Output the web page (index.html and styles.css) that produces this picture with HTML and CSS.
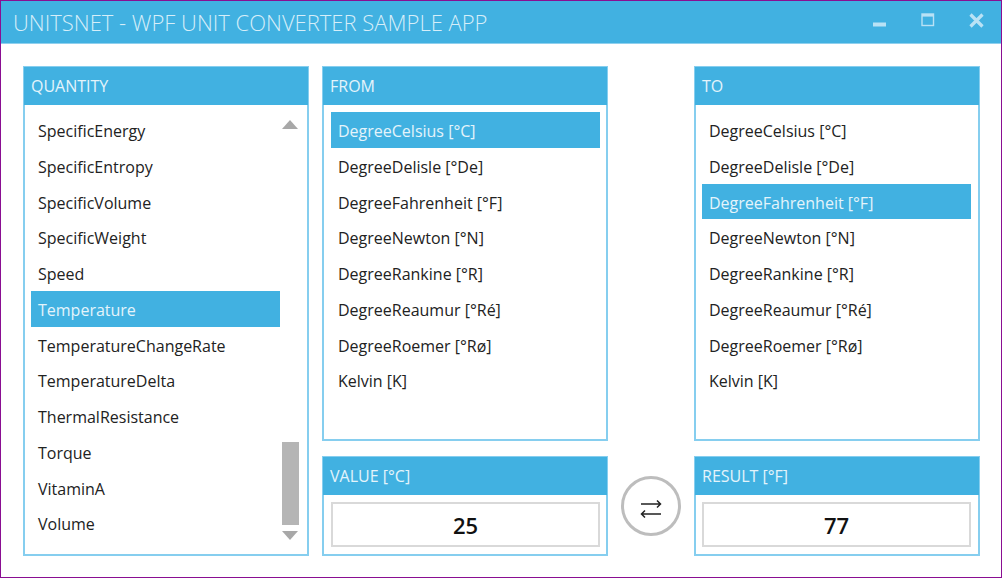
FILE: index.html
```html
<!DOCTYPE html>
<html lang="en">
<head>
<meta charset="utf-8">
<title>UnitsNet - WPF Unit Converter Sample App</title>
<link rel="stylesheet" href="styles.css">
</head>
<body>
<div class="window">
  <header class="titlebar">
    <h1 class="title">UNITSNET - WPF UNIT CONVERTER SAMPLE APP</h1>
    <div class="controls">
      <svg class="ctl" width="14" height="14" viewBox="0 0 14 14"><rect x="0" y="9.5" width="13" height="4" fill="#b9e2f5"/></svg>
      <svg class="ctl" width="14" height="14" viewBox="0 0 14 14"><rect x="1" y="1" width="11.5" height="11.5" fill="none" stroke="#b9e2f5" stroke-width="1.4"/><rect x="1" y="1" width="11.5" height="2.6" fill="#b9e2f5"/></svg>
      <svg class="ctl" width="15" height="15" viewBox="0 0 15 15"><path d="M1.5 1.5 13.5 13.5M13.5 1.5 1.5 13.5" stroke="#b9e2f5" stroke-width="3.2" fill="none"/></svg>
    </div>
  </header>
  <main class="content">
    <section class="panel quantity">
      <h2 class="panel-head">QUANTITY</h2>
      <div class="list-wrap">
        <ul class="list">
          <li>SpecificEnergy</li>
          <li>SpecificEntropy</li>
          <li>SpecificVolume</li>
          <li>SpecificWeight</li>
          <li>Speed</li>
          <li class="selected">Temperature</li>
          <li>TemperatureChangeRate</li>
          <li>TemperatureDelta</li>
          <li>ThermalResistance</li>
          <li>Torque</li>
          <li>VitaminA</li>
          <li>Volume</li>
        </ul>
        <div class="scrollbar">
          <span class="arrow-up"></span>
          <span class="thumb"></span>
          <span class="arrow-down"></span>
        </div>
      </div>
    </section>
    <section class="panel from">
      <h2 class="panel-head">FROM</h2>
      <ul class="list">
        <li class="selected">DegreeCelsius [°C]</li>
        <li>DegreeDelisle [°De]</li>
        <li>DegreeFahrenheit [°F]</li>
        <li>DegreeNewton [°N]</li>
        <li>DegreeRankine [°R]</li>
        <li>DegreeReaumur [°Ré]</li>
        <li>DegreeRoemer [°Rø]</li>
        <li>Kelvin [K]</li>
      </ul>
    </section>
    <section class="panel to">
      <h2 class="panel-head">TO</h2>
      <ul class="list">
        <li>DegreeCelsius [°C]</li>
        <li>DegreeDelisle [°De]</li>
        <li class="selected">DegreeFahrenheit [°F]</li>
        <li>DegreeNewton [°N]</li>
        <li>DegreeRankine [°R]</li>
        <li>DegreeReaumur [°Ré]</li>
        <li>DegreeRoemer [°Rø]</li>
        <li>Kelvin [K]</li>
      </ul>
    </section>
    <section class="panel value">
      <h2 class="panel-head">VALUE [°C]</h2>
      <div class="field-wrap"><div class="field">25</div></div>
    </section>
    <div class="swap-cell">
      <div class="swap">
        <svg width="22" height="24" viewBox="0 0 22 24"><path d="M1 10H20.500M17 6.500 20.500 10 17 13.500M21 20H1.500M5 16.500 1.500 20 5 23.500" fill="none" stroke="#222" stroke-width="1.500"/></svg>
      </div>
    </div>
    <section class="panel result">
      <h2 class="panel-head">RESULT [°F]</h2>
      <div class="field-wrap"><div class="field">77</div></div>
    </section>
  </main>
</div>
</body>
</html>
```

FILE: styles.css
```css
* { box-sizing: border-box; }
html, body { margin: 0; padding: 0; background: #fff; }
.window {
  width: 1002px;
  height: 578px;
  border: 1px solid #8a0e92;
  display: flex;
  flex-direction: column;
  font-family: "Open Sans", "Noto Sans", "Liberation Sans", sans-serif;
  color: #222;
  overflow: hidden;
}
.titlebar {
  height: 43px;
  flex: none;
  background: #41b1e1;
  display: flex;
  align-items: center;
  justify-content: space-between;
  padding: 0 17px 0 12px;
  border-bottom: 1px solid #8fd0ee;
}
.title {
  margin: 0;
  font-weight: 300;
  font-size: 22px;
  color: #d6eef9;
  white-space: nowrap;
}
.controls { display: flex; align-items: flex-start; gap: 34px; margin-top: -4px; }
.ctl { display: block; }
.content {
  flex: 1;
  display: grid;
  grid-template-columns: 299px 286px 86px 286px;
  grid-template-rows: 375px 100px;
  row-gap: 15px;
  padding: 22px 0 0 22px;
}
.panel {
  border: 2px solid #86ceef;
  display: flex;
  flex-direction: column;
  background: #fff;
  min-height: 0;
}
.quantity { grid-column: 1; grid-row: 1 / span 2; margin-right: 13px; }
.from { grid-column: 2; grid-row: 1; }
.to { grid-column: 4; grid-row: 1; }
.value { grid-column: 2; grid-row: 2; }
.swap-cell { grid-column: 3; grid-row: 2; display: flex; align-items: center; justify-content: center; }
.result { grid-column: 4; grid-row: 2; }
.panel-head {
  flex: none;
  height: 38px;
  line-height: 39px;
  margin: -1px -1px 0;
  padding: 0 7px;
  background: #41b1e1;
  color: #e4f4fb;
  font-size: 16px;
  font-weight: 400;
}
.list-wrap { display: flex; flex: 1; min-height: 0; }
.list {
  list-style: none;
  margin: 0;
  padding: 7px 6px 0;
  flex: 1;
  font-size: 16px;
}
.from .list { padding-left: 7px; }
.to .list { padding-right: 7px; }
.quantity .list { padding-right: 0; flex: none; width: 255px; }
.list li {
  height: 35.75px;
  line-height: 39px;
  padding-left: 7px;
  white-space: nowrap;
}
.list li.selected { background: #41b1e1; color: #e4f4fb; }
.scrollbar {
  width: 17px;
  margin-left: 2px;
  display: flex;
  flex-direction: column;
  align-items: flex-start;
  padding: 15px 0 14px;
}
.arrow-up {
  width: 0; height: 0;
  border-left: 8px solid transparent;
  border-right: 8px solid transparent;
  border-bottom: 9px solid #a8a8a8;
}
.arrow-down {
  width: 0; height: 0;
  border-left: 8px solid transparent;
  border-right: 8px solid transparent;
  border-top: 9px solid #a8a8a8;
}
.thumb { width: 17px; height: 83px; background: #b5b5b5; margin-top: auto; margin-bottom: 6px; }
.field-wrap { flex: 1; padding: 7px 6px 6px; }
.value .field-wrap { padding-left: 7px; }
.result .field-wrap { padding-right: 7px; }
.field {
  height: 45px;
  border: 2px solid #d9d9d9;
  display: flex;
  align-items: center;
  justify-content: center;
  font-size: 22px;
  font-weight: 600;
  color: #111;
}
.swap {
  width: 60px;
  height: 60px;
  border-radius: 50%;
  border: 3px solid #bdbdbd;
  display: flex;
  align-items: center;
  justify-content: center;
}
```
